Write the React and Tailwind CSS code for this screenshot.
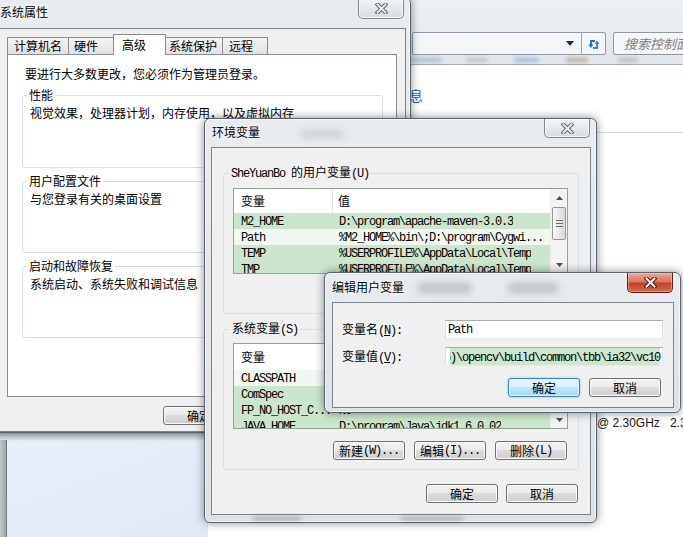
const U_ROWS = [
  { n: "M2_HOME", v: "D:\\program\\apache-maven-3.0.3", hl: true },
  { n: "Path", v: "%M2_HOME%\\bin\\;D:\\program\\Cygwi...", hl: false },
  { n: "TEMP", v: "%USERPROFILE%\\AppData\\Local\\Temp", hl: true },
  { n: "TMP", v: "%USERPROFILE%\\AppData\\Local\\Temp", hl: true },
]

const S_ROWS = [
  { n: "CLASSPATH", v: ".;%JAVA_HOME%\\lib\\dt.jar;%JAVA_HOME%\\lib\\tools.jar", hl: false },
  { n: "ComSpec", v: "%SystemRoot%\\system32\\cmd.exe", hl: true },
  { n: "FP_NO_HOST_C...", v: "NO", hl: true },
  { n: "JAVA_HOME", v: "D:\\program\\Java\\jdk1.6.0_02", hl: true },
  { n: "NUMBER_OF_PR...", v: "4", hl: true },
]

// half-width latin, like NSimSun
const M = ({ children }) => (
  <span className="[font-family:'Liberation_Mono',monospace] tracking-[-1.2px]">{children}</span>
)

function XGlyph({ active }) {
  const d = "M2.5 1.5 L10.5 9.5 M10.5 1.5 L2.5 9.5"
  return (
    <svg width="13" height="11" viewBox="0 0 13 11">
      <path d={d} stroke={active ? "#4a1a12" : "#5f666e"} strokeWidth="4" strokeLinecap="square" fill="none" />
      <path d={d} stroke={active ? "#ffffff" : "#e9ebee"} strokeWidth="2" strokeLinecap="square" fill="none" />
    </svg>
  )
}

function CloseBtn({ active, className }) {
  return (
    <div
      className={
        (active
          ? "border-[#5a2118] bg-[linear-gradient(180deg,#eaa898_0%,#d9765f_45%,#c2432c_55%,#d8694e_100%)] shadow-[inset_0_0_0_1px_rgba(255,215,205,0.45)] "
          : "border-[#7d8792] bg-[linear-gradient(180deg,#f4f6f8_0%,#e6e9ec_50%,#d6dbe0_100%)] shadow-[inset_0_0_0_1px_rgba(255,255,255,0.7)] ") +
        "ml-auto w-[46px] shrink-0 rounded-b-[5px] border border-t-0 flex items-center justify-center " +
        className
      }
    >
      <XGlyph active={active} />
    </div>
  )
}

function Btn({ children, primary }) {
  return (
    <div
      className={
        (primary
          ? "border-[#3c7fb1] bg-[linear-gradient(180deg,#eaf6fd_0%,#d9f0fc_50%,#bee6fd_50%,#a7d9f5_100%)] shadow-[inset_0_0_0_1px_#e4f3fc,0_0_3px_#8ccaf2] "
          : "border-[#707070] bg-[linear-gradient(180deg,#f2f2f2_0%,#ebebeb_50%,#dddddd_50%,#cfcfcf_100%)] shadow-[inset_0_0_0_1px_#fbfbfb] ") +
        "w-[72px] h-[19px] shrink-0 rounded-[3px] border flex items-center justify-center leading-[16px]"
      }
    >
      {children}
    </div>
  )
}

function Arrow({ up }) {
  return (
    <svg width="7" height="4" viewBox="0 0 7 4">
      <polygon points={up ? "0,4 3.5,0 7,4" : "0,0 7,0 3.5,4"} fill="#4f4f4f" />
    </svg>
  )
}

function ScrollBar({ thumb }) {
  return (
    <div className="w-[17px] shrink-0 flex flex-col bg-[#f3f3f3] border-l border-[#ececec]">
      <div className="h-[17px] flex items-center justify-center">
        <Arrow up />
      </div>
      <div className="flex-1 px-[1px]">
        <div className={thumb + " rounded-[2px] border border-[#979797] bg-[linear-gradient(90deg,#f7f7f7,#d9d9d9)] flex flex-col items-center justify-center gap-[2px]"}>
          <div className="w-[7px] h-px bg-[#6a6a6a]" />
          <div className="w-[7px] h-px bg-[#6a6a6a]" />
          <div className="w-[7px] h-px bg-[#6a6a6a]" />
        </div>
      </div>
      <div className="h-[17px] flex items-center justify-center">
        <Arrow />
      </div>
    </div>
  )
}

function ListView({ rows, thumb, className, head }) {
  return (
    <div className={"w-[335px] h-[86px] ml-[9px] border border-[#8fa78f] bg-white flex overflow-hidden " + className}>
      <div className="flex-1 min-w-0 flex flex-col">
        <div className={head + " shrink-0 flex items-center bg-white"}>
          <div className="w-[99px] h-full flex items-center pl-[7px] border-r border-[#e6e6e6]">变量</div>
          <div className="pl-[5px]">值</div>
        </div>
        {rows.map((r) => (
          <div
            key={r.n}
            className={(r.hl ? "bg-[#cce6cd] " : "bg-[#f1f8f1] ") + "h-[16px] shrink-0 flex items-center"}
          >
            <div className="w-[99px] shrink-0 pl-[7px] whitespace-nowrap overflow-hidden">
              <M>{r.n}</M>
            </div>
            <div className="pl-[6px] whitespace-nowrap overflow-hidden">
              <M>{r.v}</M>
            </div>
          </div>
        ))}
      </div>
      <ScrollBar thumb={thumb} />
    </div>
  )
}

function Tab({ children, className }) {
  return (
    <div className={"h-[17px] mb-[1px] shrink-0 border border-b-0 border-[#898c95] bg-[linear-gradient(180deg,#f4f4f4,#e1e1e1)] flex items-center leading-[16px] " + className}>
      {children}
    </div>
  )
}

const frame =
  "absolute flex flex-col rounded-[6px] border border-[#59626d] bg-[linear-gradient(180deg,#e9ecef,#dde2e7)] shadow-[inset_0_0_0_1px_rgba(255,255,255,0.6),0_0_10px_rgba(0,0,0,0.45)]"
const title = "leading-[16px] whitespace-nowrap [text-shadow:0_0_6px_#fff,0_0_3px_#fff]"
const blob = "h-[12px] rounded-full bg-[#8e959d] opacity-40 blur-[3px]"

export default function App() {
  return (
    <div className="relative w-[683px] h-[537px] overflow-hidden bg-white text-[12px] leading-[16px] text-black [font-family:'Noto_Sans_CJK_SC',sans-serif]">
      {/* control panel behind */}
      <div className="h-[65px] border-b border-[#a3adb9] bg-[linear-gradient(180deg,#eef1f4,#e2e7ec)] flex flex-col pl-[412px] pt-[32px]">
        <div className="flex gap-[7px]">
          <div className="w-[194px] h-[23px] shrink-0 border border-[#8e99a5] rounded-[2px] bg-[rgba(255,255,255,0.55)] flex items-center">
            <div className="flex-1" />
            <svg width="8" height="5" viewBox="0 0 8 5" className="mr-[7px]">
              <polygon points="0,0 8,0 4,5" fill="#1b2b4f" />
            </svg>
            <div className="w-px h-full bg-[#9aa4ae]" />
            <div className="w-[23px] h-full flex items-center justify-center">
              <svg width="14" height="12" viewBox="0 0 14 12">
                <path d="M8 3 H4 V7" stroke="#2a6ebb" strokeWidth="2" fill="none" />
                <polygon points="1.5,6.5 6.5,6.5 4,10" fill="#2a6ebb" />
                <path d="M6 10 H10 V6" stroke="#3a86d0" strokeWidth="2" fill="none" />
                <polygon points="7.5,6 12.5,6 10,2.5" fill="#3a86d0" />
              </svg>
            </div>
          </div>
          <div className="w-[100px] h-[23px] shrink-0 border border-[#8e99a5] rounded-[2px] bg-[rgba(255,255,255,0.6)] flex items-center pl-[10px] italic text-[13px] text-[#7a7a7a] whitespace-nowrap overflow-hidden">
            搜索控制面板
          </div>
        </div>
        <div className="mt-[1px] h-[8px] flex items-center">
          <div className="w-[30px] h-[4px] bg-[#7d97b8] opacity-60 blur-[2px]" />
          <div className="ml-[24px] w-[22px] h-[4px] bg-[#a5a5a5] opacity-60 blur-[2px]" />
          <div className="ml-[26px] w-[25px] h-[4px] bg-[#6f98c8] opacity-60 blur-[2px]" />
          <div className="ml-[27px] w-[22px] h-[4px] bg-[#9a7c64] opacity-60 blur-[2px]" />
          <div className="ml-[30px] w-[20px] h-[4px] bg-[#9a9a9a] opacity-60 blur-[2px]" />
        </div>
      </div>
      <div className="ml-[395px] mt-[21px] text-[14px] leading-[18px] text-[#1d5cc0] whitespace-nowrap">信息</div>
      <div className="ml-[597px] mt-[28px] h-px w-[86px] bg-[#d9dde2]" />
      <div className="ml-[597px] mt-[282px] flex text-[12px] leading-[16px] text-[#1a1a1a] whitespace-nowrap [font-family:'Liberation_Sans',sans-serif]">
        <span>@ 2.30GHz</span>
        <span className="ml-[10px]">2.3</span>
      </div>
      <div className="mt-[2px] h-[104px] w-[208px] flex flex-col">
        <div className="h-[7px] bg-[linear-gradient(180deg,#b9c0c7,#dfe6ee)]" />
        <div className="flex-1 flex">
          <div className="w-[7px] bg-[linear-gradient(90deg,#c3c8cd,#9ca3aa)] border-r border-[#6f7780]" />
          <div className="flex-1 bg-[linear-gradient(160deg,#e6eff9,#e0eaf7)]" />
        </div>
      </div>

      {/* 系统属性 */}
      <div className={frame + " left-[-9px] top-[-3px] w-[420px] h-[436px]"}>
        <div className="h-[30px] shrink-0 flex items-start">
          <div className={title + " ml-[8px] mt-[6px]"}>系统属性</div>
          <CloseBtn className="mr-[6px] h-[21px]" />
        </div>
        <div className="flex-1 ml-[7px] mr-[4px] border border-[#7b848d] bg-[#f0f0f0] flex flex-col">
          <div className="relative z-10 mt-[5px] h-[21px] pl-[7px] flex items-end">
            <Tab className="w-[62px] pl-[6px]">计算机名</Tab>
            <Tab className="w-[46px] -ml-px pl-[5px]">硬件</Tab>
            <div className="h-[21px] w-[53px] -ml-px shrink-0 border border-b-0 border-[#898c95] bg-white pl-[8px] pt-[2px] leading-[16px]">高级</div>
            <Tab className="w-[58px] -ml-px pl-[3px]">系统保护</Tab>
            <Tab className="w-[46px] -ml-px pl-[6px]">远程</Tab>
          </div>
          <div className="-mt-px ml-[7px] w-[390px] h-[343px] border border-[#898c95] bg-white flex flex-col">
            <div className="pt-[11px] pl-[17px]">要进行大多数更改，您必须作为管理员登录。</div>
            <fieldset className="ml-[14px] mt-[5px] w-[361px] h-[81px] rounded-[3px] border border-[#d5dfe5]">
              <legend className="ml-[4px] px-[2px] leading-[16px]">性能</legend>
              <div className="pl-[7px] pt-[2px]">视觉效果，处理器计划，内存使用，以及虚拟内存</div>
            </fieldset>
            <fieldset className="ml-[14px] mt-[5px] w-[361px] h-[80px] rounded-[3px] border border-[#d5dfe5]">
              <legend className="ml-[4px] px-[2px] leading-[16px]">用户配置文件</legend>
              <div className="pl-[7px] pt-[2px]">与您登录有关的桌面设置</div>
            </fieldset>
            <fieldset className="ml-[14px] mt-[5px] w-[361px] h-[80px] rounded-[3px] border border-[#d5dfe5]">
              <legend className="ml-[4px] px-[2px] leading-[16px]">启动和故障恢复</legend>
              <div className="pl-[7px] pt-[2px]">系统启动、系统失败和调试信息</div>
            </fieldset>
          </div>
          <div className="mt-[9px] pl-[163px] flex gap-[8px]">
            <Btn>确定</Btn>
            <Btn>取消</Btn>
          </div>
        </div>
      </div>

      {/* 环境变量 */}
      <div className={frame + " left-[204px] top-[118px] w-[393px] h-[405px]"}>
        <div className="h-[28px] shrink-0 flex items-start">
          <div className={title + " ml-[7px] mt-[5px]"}>环境变量</div>
          <div className="ml-[40px] mt-[10px] w-[45px] h-[10px] rounded-full bg-[#8e959d] opacity-25 blur-[3px]" />
          <CloseBtn className="mr-[6px] h-[19px]" />
        </div>
        <div className="flex-1 ml-[6px] mr-[5px] border border-[#7b848d] bg-[#f0f0f0] flex flex-col">
          <fieldset className="ml-[11px] mt-[16px] w-[356px] h-[150px] shrink-0 rounded-[3px] border border-[#d5dfe5]">
            <legend className="ml-[5px] px-[2px] leading-[16px] whitespace-nowrap">
              <M>SheYuanBo </M>的用户变量<M>(U)</M>
            </legend>
            <ListView rows={U_ROWS} head="h-[24px]" thumb="mt-[1px] h-[33px]" className="mt-[6px]" />
            <div className="mt-[12px] pl-[109px] flex gap-[9px]">
              <Btn>新建<M>(N)...</M></Btn>
              <Btn>编辑<M>(E)...</M></Btn>
              <Btn>删除<M>(D)</M></Btn>
            </div>
          </fieldset>
          <fieldset className="ml-[11px] mt-[6px] w-[356px] h-[150px] shrink-0 rounded-[3px] border border-[#d5dfe5]">
            <legend className="ml-[6px] px-[2px] leading-[16px] whitespace-nowrap">
              系统变量<M>(S)</M>
            </legend>
            <ListView rows={S_ROWS} head="h-[26px]" thumb="mt-[8px] h-[28px]" className="mt-[5px]" />
            <div className="mt-[12px] pl-[109px] flex gap-[9px]">
              <Btn>新建<M>(W)...</M></Btn>
              <Btn>编辑<M>(I)...</M></Btn>
              <Btn>删除<M>(L)</M></Btn>
            </div>
          </fieldset>
          <div className="mt-[14px] pr-[12px] flex justify-end gap-[8px]">
            <Btn>确定</Btn>
            <Btn>取消</Btn>
          </div>
        </div>
        <div className="h-[7px] shrink-0 flex items-center">
          <div className="ml-[48px] w-[48px] h-[3px] bg-[#444] opacity-40 blur-[2px]" />
          <div className="ml-[100px] w-[62px] h-[3px] bg-[#444] opacity-40 blur-[2px]" />
        </div>
      </div>

      {/* 编辑用户变量 */}
      <div className={frame + " left-[324px] top-[272px] w-[357px] h-[141px]"}>
        <div className="h-[29px] shrink-0 flex items-start">
          <div className={title + " ml-[7px] mt-[6px]"}>编辑用户变量</div>
          <div className={blob + " ml-[13px] mt-[9px] w-[55px]"} />
          <div className={blob + " ml-[35px] mt-[9px] w-[52px]"} />
          <CloseBtn active className="mr-[7px] h-[20px]" />
        </div>
        <div className="flex-1 ml-[7px] mr-[6px] mb-[4px] border border-[#7b848d] bg-[#f0f0f0] flex flex-col">
          <div className="mt-[17px] h-[19px] flex items-center">
            <div className="w-[112px] shrink-0 pl-[9px] whitespace-nowrap">
              变量名<M>(<span className="underline">N</span>):</M>
            </div>
            <div className="w-[218px] h-[19px] border border-[#abadb3] border-x-[#dbdfe6] border-b-[#e3e9ef] bg-white flex items-center pl-[2px]">
              <M>Path</M>
            </div>
          </div>
          <div className="mt-[8px] h-[19px] flex items-center">
            <div className="w-[112px] shrink-0 pl-[9px] whitespace-nowrap">
              变量值<M>(<span className="underline">V</span>):</M>
            </div>
            <div className="w-[218px] h-[19px] border border-[#abadb3] border-x-[#dbdfe6] border-b-[#e3e9ef] bg-white flex items-center pl-[4px] pr-[1px]">
              <div className="flex-1 h-full overflow-hidden flex items-center justify-end">
                <span className="shrink-0 whitespace-nowrap bg-[#cde6cd] leading-[15px] mr-[1px]">
                  <M>x86)\opencv\build\common\tbb\ia32\vc10</M>
                </span>
              </div>
            </div>
          </div>
          <div className="mt-[12px] pr-[12px] flex justify-end gap-[9px]">
            <Btn primary>确定</Btn>
            <Btn>取消</Btn>
          </div>
        </div>
      </div>
    </div>
  )
}
